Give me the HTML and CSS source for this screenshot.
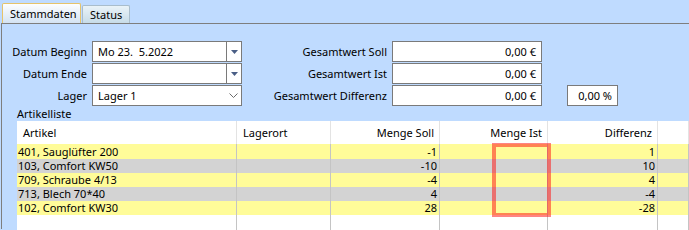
FILE: index.html
```html
<!DOCTYPE html>
<html lang="de">
<head>
<meta charset="utf-8">
<title>Stammdaten</title>
<link rel="stylesheet" href="styles.css">
</head>
<body>
<div class="tabs">
  <div class="tab tab-active">Stammdaten</div>
  <div class="tab">Status</div>
</div>
<div class="panel">
  <div class="form">
    <div class="lbl">Datum Beginn</div>
    <div class="box combo"><span class="val">Mo 23.  5.2022</span><span class="btn"><svg width="7" height="4" viewBox="0 0 7 4"><path d="M0 0H7L3.5 4Z" fill="#4a5f86"/></svg></span></div>
    <div class="lbl">Gesamtwert Soll</div>
    <div class="box num">0,00 €</div>
    <div></div>

    <div class="lbl">Datum Ende</div>
    <div class="box combo"><span class="val"></span><span class="btn"><svg width="7" height="4" viewBox="0 0 7 4"><path d="M0 0H7L3.5 4Z" fill="#4a5f86"/></svg></span></div>
    <div class="lbl">Gesamtwert Ist</div>
    <div class="box num">0,00 €</div>
    <div></div>

    <div class="lbl">Lager</div>
    <div class="box combo"><span class="val">Lager 1</span><span class="chev"><svg width="9" height="5" viewBox="0 0 9 5"><path d="M0.5 0.5L4.5 4.5L8.5 0.5" fill="none" stroke="#6b6b6b" stroke-width="1"/></svg></span></div>
    <div class="lbl">Gesamtwert Differenz</div>
    <div class="box num">0,00 €</div>
    <div class="pct-cell"><div class="box num pct">0,00 %</div></div>
  </div>
  <div class="list-label">Artikelliste</div>
  <div class="grid">
    <div class="row head">
      <div class="c">Artikel</div>
      <div class="c">Lagerort</div>
      <div class="c r">Menge Soll</div>
      <div class="c r">Menge Ist</div>
      <div class="c r">Differenz</div>
      <div class="c"></div>
    </div>
    <div class="row y first">
      <div class="c">401, Sauglüfter 200</div><div class="c"></div><div class="c r">-1</div><div class="c r"></div><div class="c r">1</div><div class="c"></div>
    </div>
    <div class="row g">
      <div class="c">103, Comfort KW50</div><div class="c"></div><div class="c r">-10</div><div class="c r"></div><div class="c r">10</div><div class="c"></div>
    </div>
    <div class="row y">
      <div class="c">709, Schraube 4/13</div><div class="c"></div><div class="c r">-4</div><div class="c r"></div><div class="c r">4</div><div class="c"></div>
    </div>
    <div class="row g">
      <div class="c">713, Blech 70*40</div><div class="c"></div><div class="c r">4</div><div class="c r"></div><div class="c r">-4</div><div class="c"></div>
    </div>
    <div class="row y">
      <div class="c">102, Comfort KW30</div><div class="c"></div><div class="c r">28</div><div class="c r"></div><div class="c r">-28</div><div class="c"></div>
    </div>
    <div class="row filler">
      <div class="c"></div><div class="c"></div><div class="c"></div><div class="c"></div><div class="c"></div><div class="c"></div>
    </div>
    <div class="highlight"></div>
  </div>
</div>
</body>
</html>
```
FILE: styles.css
```css
html, body {
  margin: 0;
  padding: 0;
  background: #bfdbff;
  overflow: hidden;
  height: 230px;
}
body {
  font-family: "Noto Sans", "Open Sans", sans-serif;
  font-size: 11px;
  color: #000;
  width: 689px;
}
.tabs {
  display: flex;
  align-items: flex-end;
  height: 23px;
  padding-left: 2px;
  gap: 1px;
}
.tab {
  box-sizing: border-box;
  height: 18px;
  padding: 0 7px 0 7px;
  line-height: 17px;
  border: 1px solid #a9bdcc;
  border-bottom: none;
  border-radius: 2px 2px 0 0;
  background: linear-gradient(#eaf3f8, #c7dce8);
}
.tab-active {
  height: 20px;
  width: 79px;
  padding: 0 0 0 7px;
  line-height: 19px;
  border-color: #e6c36a;
  background: linear-gradient(#fdfeff, #d4e3f3);
}
.panel {
  margin-left: 1px;
  border-top: 1px solid #7e7e7e;
  border-left: 1px solid #7e7e7e;
  height: 206px;
  padding-top: 17px;
  box-sizing: border-box;
}
.form {
  display: grid;
  grid-template-columns: 90px 150px 150px 150px 76px;
  grid-auto-rows: 21px;
  row-gap: 1px;
}
.lbl {
  text-align: right;
  padding-right: 5px;
  line-height: 21px;
  white-space: nowrap;
}
.box {
  box-sizing: border-box;
  height: 21px;
  border: 1px solid #7a7a7a;
  background: #fff;
  line-height: 19px;
}
.combo {
  display: flex;
}
.val {
  flex: 1;
  padding-left: 5px;
  white-space: pre;
}
.btn {
  width: 14px;
  border-left: 1px solid #7a7a7a;
  display: flex;
  align-items: center;
  justify-content: center;
}
.chev {
  width: 15px;
  display: flex;
  align-items: center;
  justify-content: center;
}
.num {
  text-align: right;
  padding-right: 5px;
}
.pct-cell {
  display: flex;
  justify-content: flex-end;
}
.pct {
  width: 51px;
}
.list-label {
  padding-left: 15px;
  height: 14px;
  line-height: 14px;
  margin-top: 1px;
}
.grid {
  position: relative;
  margin-left: 15px;
  background: #fff;
}
.row {
  display: grid;
  grid-template-columns: 220px 94px 109px 108px 110px 1fr;
  height: 14px;
  line-height: 14px;
}
.row .c {
  border-right: 1px solid #c4c4c4;
  padding: 0 2px 0 1px;
  white-space: nowrap;
  overflow: hidden;
}
.row .r {
  text-align: right;
}
.head {
  height: 23px;
  line-height: 23px;
  background: #fff;
}
.head .c {
  border-right-color: #e3e3e3;
  padding: 0 5px 0 6px;
}
.first {
  height: 15px;
  line-height: 15px;
}
.y {
  background: #fffc99;
}
.g {
  background: #d3d3d3;
}
.filler {
  height: 15px;
}
.highlight {
  position: absolute;
  left: 475px;
  top: 22px;
  width: 59px;
  height: 74px;
  box-sizing: border-box;
  border: 4px solid rgba(255, 20, 20, 0.52);
}
```
